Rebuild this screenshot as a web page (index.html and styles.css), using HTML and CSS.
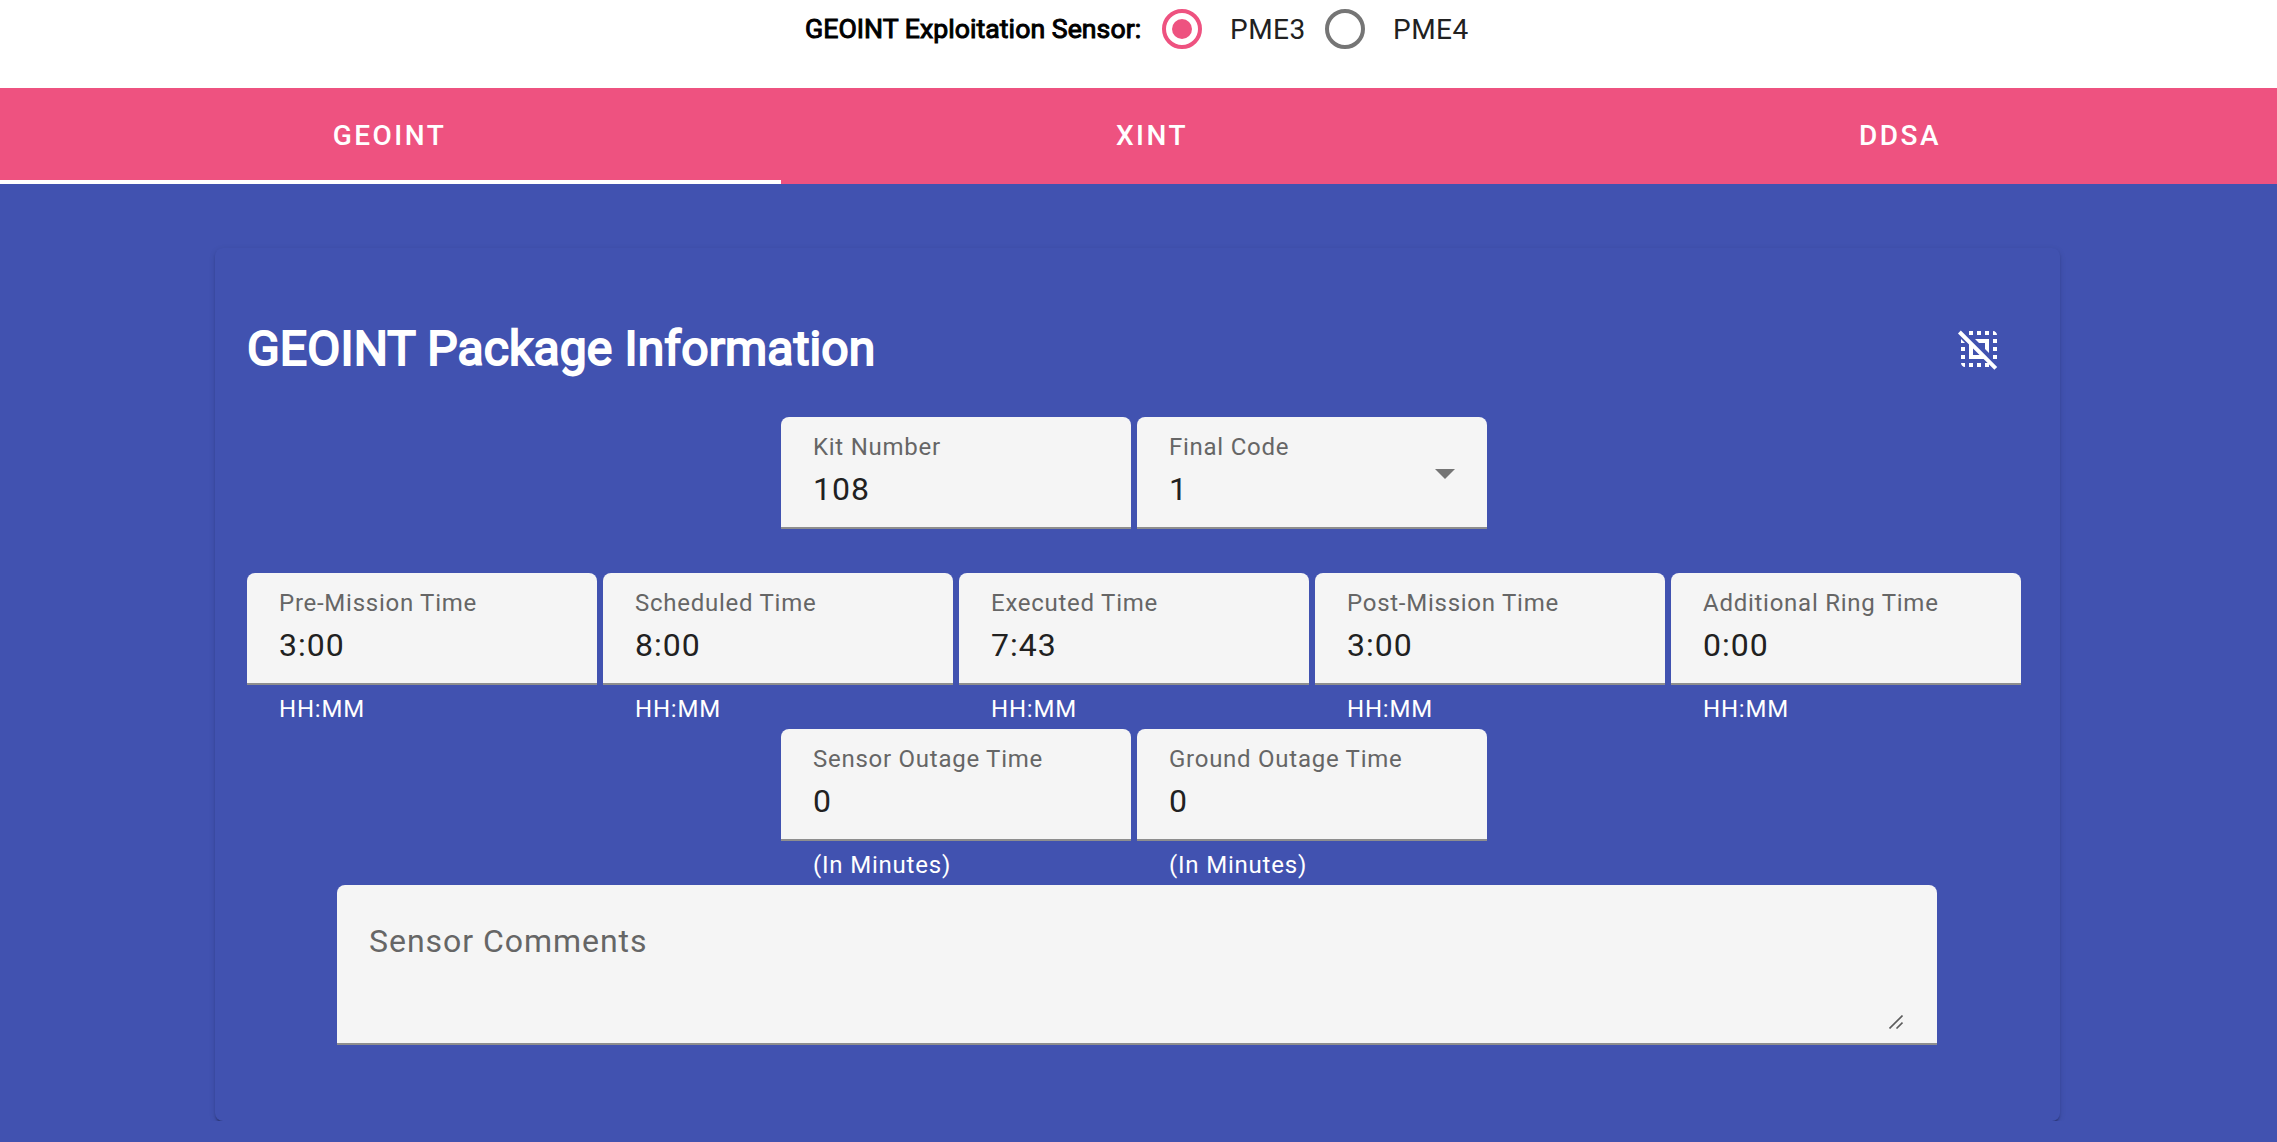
FILE: index.html
```html
<!DOCTYPE html>
<html lang="en">
<head>
<meta charset="utf-8">
<title>GEOINT Package Information</title>
<link rel="stylesheet" href="styles.css">
</head>
<body>
<header class="sensor">
  <span class="sensor-label">GEOINT Exploitation Sensor:</span>
  <span class="radio radio-on"></span><span class="radio-text">PME3</span>
  <span class="radio"></span><span class="radio-text">PME4</span>
</header>
<nav class="tabs">
  <div class="tab tab-active">GEOINT</div>
  <div class="tab">XINT</div>
  <div class="tab">DDSA</div>
</nav>
<main class="view">
  <section class="card">
    <div class="card-head">
      <h2 class="title">GEOINT Package Information</h2>
      <svg class="deselect" viewBox="0 0 24 24" fill="#fff">
        <path d="M3 13h2v-2H3v2zM3 17h2v-2H3v2zM5 21v-2H3c0 1.100.900 2 2 2zM3 7v2h2zM7 21h2v-2H7v2zM13 3h-2v2h2V3zM9 3H7v2h2V3zM11 21h2v-2h-2v2zM19 13h2v-2h-2v2zM15 21h2v-2h-2v2zM19 9h2V7h-2v2zM19 17h2v-2h-2v2zM15 5h2V3h-2v2zM19 3v2h2c0-1.100-.900-2-2-2z"/>
        <path d="M10 7H17v7l-2-2V9h-3zM7 8.800l2 2V15h4.200l2 2H7z"/>
        <path d="M2.900 2.800L21.100 21L19.700 22.400L1.500 4.200z"/>
      </svg>
    </div>
    <div class="row">
      <div class="field"><div class="box"><span class="label">Kit Number</span><span class="value">108</span></div></div>
      <div class="field"><div class="box"><span class="label">Final Code</span><span class="value">1</span><svg class="arrow" viewBox="0 0 20 10"><path d="M0 0h20L10 10z" fill="#757575"/></svg></div></div>
    </div>
    <div class="row">
      <div class="field"><div class="box"><span class="label">Pre-Mission Time</span><span class="value">3:00</span></div><div class="help">HH:MM</div></div>
      <div class="field"><div class="box"><span class="label">Scheduled Time</span><span class="value">8:00</span></div><div class="help">HH:MM</div></div>
      <div class="field"><div class="box"><span class="label">Executed Time</span><span class="value">7:43</span></div><div class="help">HH:MM</div></div>
      <div class="field"><div class="box"><span class="label">Post-Mission Time</span><span class="value">3:00</span></div><div class="help">HH:MM</div></div>
      <div class="field"><div class="box"><span class="label">Additional Ring Time</span><span class="value">0:00</span></div><div class="help">HH:MM</div></div>
    </div>
    <div class="row">
      <div class="field"><div class="box"><span class="label">Sensor Outage Time</span><span class="value">0</span></div><div class="help">(In Minutes)</div></div>
      <div class="field"><div class="box"><span class="label">Ground Outage Time</span><span class="value">0</span></div><div class="help">(In Minutes)</div></div>
    </div>
    <div class="comments">
      <span class="comments-label">Sensor Comments</span>
      <svg class="grip" viewBox="0 0 14 14" stroke="#5c5c5c" stroke-width="1.600" fill="none"><path d="M.500 13.500l13-13M7.500 13.500l6-6"/></svg>
    </div>
  </section>
</main>
</body>
</html>
```

FILE: styles.css
```css
* { box-sizing: border-box; }
body {
  margin: 0;
  height: 1142px;
  overflow: hidden;
  background: #4152b0;
  font-family: Roboto, sans-serif;
}
.sensor {
  display: flex;
  align-items: center;
  height: 88px;
  padding: 0 0 30px 805px;
  background: #fff;
  font-size: 28px;
  white-space: nowrap;
}
.sensor-label {
  width: 357px;
  color: #000;
  font-size: 26.67px;
  letter-spacing: 0.04px;
  -webkit-text-stroke: 1px #000;
}
.radio {
  display: grid;
  place-items: center;
  width: 40px;
  height: 40px;
  border: 4px solid #757575;
  border-radius: 50%;
}
.radio-on { border-color: #ee5280; }
.radio-on::after {
  content: "";
  width: 20px;
  height: 20px;
  border-radius: 50%;
  background: #ee5280;
}
.radio-text {
  width: 123px;
  padding-left: 28px;
  color: #212121;
  letter-spacing: 0.5px;
}
.tabs {
  display: grid;
  grid-template-columns: 781fr 744fr 752fr;
  height: 96px;
  background: #ee5280;
}
.tab {
  padding: 0 50px 0 48px;
  color: #fff;
  font-size: 28px;
  font-weight: 500;
  line-height: 96px;
  letter-spacing: 2.5px;
  text-align: center;
}
.tab-active { box-shadow: inset 0 -4px #fff; }
.view {
  height: 937px;
  padding: 64px 0 0 215px;
  overflow: hidden;
}
.card {
  width: 1845px;
  height: 873px;
  padding: 64px 33px 0 32px;
  border-radius: 8px;
  background: #4152b0;
  box-shadow: 0 4px 2px -2px rgba(0, 0, 0, .2), 0 2px 2px rgba(0, 0, 0, .14), 0 2px 6px rgba(0, 0, 0, .12);
}
.card-head {
  display: flex;
  justify-content: space-between;
  align-items: center;
  height: 74px;
  margin-bottom: 31px;
  padding-right: 24px;
}
.title {
  margin: 0;
  padding-bottom: 2px;
  color: #fff;
  font-size: 48px;
  font-weight: 400;
  letter-spacing: 0.15px;
  white-space: nowrap;
  -webkit-text-stroke: 2px #fff;
}
.deselect { width: 48px; height: 48px; }
.row {
  display: flex;
  justify-content: center;
  height: 156px;
}
.field { width: 350px; margin-right: 6px; }
.box {
  position: relative;
  display: flex;
  flex-direction: column;
  height: 112px;
  padding: 15px 32px 0;
  border-bottom: 2px solid #8e8e8e;
  border-radius: 8px 8px 0 0;
  background: #f5f5f5;
}
.label {
  color: #666;
  font-size: 24px;
  line-height: 30px;
  letter-spacing: 0.74px;
  white-space: nowrap;
}
.value {
  margin-top: 6px;
  color: #212121;
  font-size: 32px;
  line-height: 42px;
  letter-spacing: 1px;
}
.arrow {
  position: absolute;
  right: 32px;
  top: 52px;
  width: 20px;
  height: 10px;
}
.help {
  padding: 9px 32px 0;
  color: #fff;
  font-size: 24px;
  line-height: 30px;
  letter-spacing: 0.8px;
}
.comments {
  display: flex;
  justify-content: space-between;
  align-items: flex-end;
  width: 1600px;
  height: 160px;
  margin: 0 auto;
  padding: 35px 34px 14px 32px;
  border-bottom: 2px solid #8e8e8e;
  border-radius: 8px 8px 0 0;
  background: #f5f5f5;
}
.comments-label {
  align-self: flex-start;
  color: #666;
  font-size: 32px;
  line-height: 42px;
  letter-spacing: 0.96px;
}
.grip { width: 14px; height: 14px; }
```
